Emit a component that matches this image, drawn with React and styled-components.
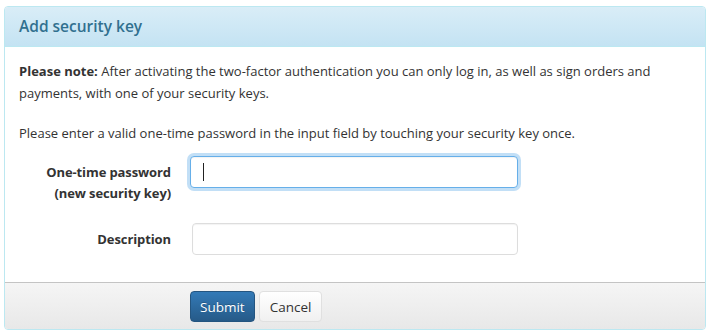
import React from "react";
import styled, { createGlobalStyle } from "styled-components";

const Global = createGlobalStyle`
  html, body { margin: 0; padding: 0; background: #fff; }
  body { font-family: "Open Sans", "Noto Sans", sans-serif; font-size: 13px; color: #333; }
  * { box-sizing: border-box; }
`;

const Page = styled.div`
  padding: 6px 6px 4px 4px;
`;

const Panel = styled.div`
  border: 1px solid #bce8f1;
  border-radius: 4px;
  background: #fff;
  overflow: hidden;
`;

const Header = styled.div`
  height: 40px;
  padding: 0 14px;
  display: flex;
  align-items: center;
  background: linear-gradient(to bottom, #d9edf7 0%, #c4e3f3 100%);
  border-bottom: 1px solid #bce8f1;
`;

const Title = styled.h3`
  margin: 0;
  font-size: 15.5px;
  font-weight: 600;
  color: #31708f;
  position: relative;
  top: -1px;
`;

const Body = styled.div`
  padding: 13px 14px 27px;
`;

const Para = styled.p`
  margin: 0 0 ${(p) => p.$mb || 0}px;
  line-height: 22px;
`;

const Note = styled.strong`
  font-weight: 700;
`;

const Form = styled.div`
  display: flex;
  flex-direction: column;
  gap: 19px;
  margin-top: 12px;
`;

const Row = styled.div`
  display: grid;
  grid-template-columns: 152px 326px;
  column-gap: 21px;
  align-items: start;
`;

const Label = styled.label`
  text-align: right;
  font-weight: 700;
  line-height: 21px;
  padding-top: ${(p) => p.$pt || 5}px;
  letter-spacing: -0.1px;
`;

const Input = styled.input`
  width: 100%;
  height: 32px;
  border-radius: 4px;
  border: 1px solid ${(p) => (p.$focus ? "#66afe9" : "#ddd")};
  box-shadow: ${(p) =>
    p.$focus
      ? "0 0 0 3px rgba(102,175,233,0.4), inset 0 1px 1px rgba(0,0,0,.05)"
      : "inset 0 1px 1px rgba(0,0,0,.05)"};
  outline: none;
  padding: 0 12px;
  font: inherit;
  background: #fff;
  position: relative;
`;

const Caret = styled.span`
  position: absolute;
  left: 13px;
  top: 7px;
  width: 1px;
  height: 18px;
  background: #222;
`;

const InputWrap = styled.div`
  position: relative;
  margin-left: ${(p) => p.$ml || 0}px;
`;

const Footer = styled.div`
  border-top: 1px solid #c4c4c4;
  background: linear-gradient(to bottom, #f5f5f5 0%, #e8e8e8 100%);
  padding: 8px 14px 6px 185px;
  display: flex;
  gap: 4px;
  height: 47px;
`;

const Button = styled.button`
  height: 31px;
  padding: 0 ${(p) => p.$px || 10}px;
  border-radius: 4px;
  font: inherit;
  font-size: 13.5px;
  cursor: pointer;
  ${(p) =>
    p.$primary
      ? `
    color: #fff;
    background: linear-gradient(to bottom, #337ab7 0%, #265a88 100%);
    border: 1px solid #245580;
    text-shadow: 0 -1px 0 rgba(0,0,0,.2);
  `
      : `
    color: #333;
    background: linear-gradient(to bottom, #fff 0%, #f0f0f0 100%);
    border: 1px solid #e0e0e0;
  `}
`;

export default function App() {
  return (
    <>
      <Global />
      <Page>
        <Panel>
          <Header>
            <Title>Add security key</Title>
          </Header>
          <Body>
            <Para $mb={18}>
              <Note>Please note:</Note> After activating the two-factor authentication you can only log in, as well as sign orders and payments, with one of your security keys.
            </Para>
            <Para>
              Please enter a valid one-time password in the input field by touching your security key once.
            </Para>
            <Form>
              <Row>
                <Label $pt={6}>
                  One-time password
                  <br />
                  (new security key)
                </Label>
                <InputWrap $ml={-2}>
                  <Input $focus />
                  <Caret />
                </InputWrap>
              </Row>
              <Row>
                <Label $pt={6}>Description</Label>
                <InputWrap>
                  <Input />
                </InputWrap>
              </Row>
            </Form>
          </Body>
          <Footer>
            <Button $primary $px={9}>Submit</Button>
            <Button $px={10}>Cancel</Button>
          </Footer>
        </Panel>
      </Page>
    </>
  );
}
